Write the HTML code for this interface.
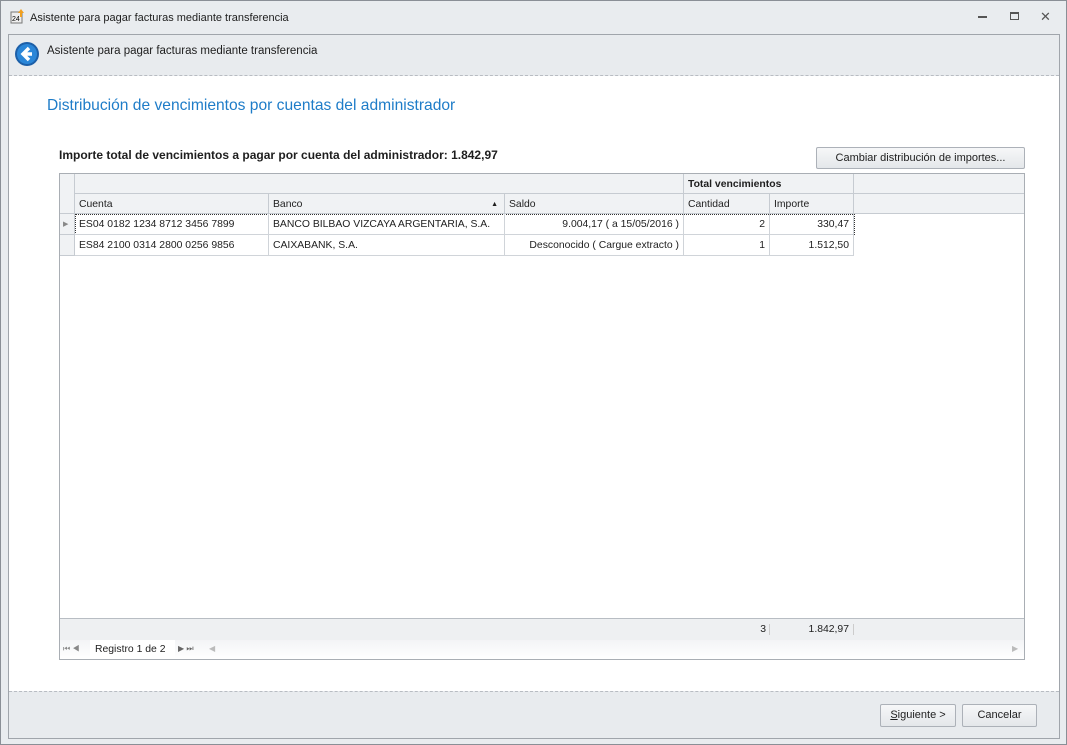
<!DOCTYPE html>
<html><head><meta charset="utf-8"><style>
*{box-sizing:border-box;margin:0;padding:0}
body{width:1067px;height:745px;position:relative;background:#dfe3e8;font-family:"Liberation Sans",sans-serif;font-size:11px;color:#1e1e1e;overflow:hidden}
.a{position:absolute}
.win{left:0;top:0;width:1067px;height:745px;border:1px solid #8a8f96;background:#e9ecef}
.panel{left:8px;top:34px;width:1052px;height:705px;border:1px solid #a0a5ab;background:#fff}
.hdr{left:0;top:0;width:1050px;height:41px;background:#e8ebee;border-bottom:1px dashed #b8bcc2}
.ftr{left:0;top:656px;width:1050px;height:47px;background:#e8ebee;border-top:1px dashed #b8bcc2}
.btn{border:1px solid #acb1b8;border-radius:2px;background:linear-gradient(#f6f7f8,#e4e7ea);text-align:center;line-height:20px;font-size:11px}
.grid{left:59px;top:173px;width:966px;height:487px;border:1px solid #a9aeb4;background:#fff;font-size:10.4px}
.c{position:absolute;border-right:1px solid #d0d4d9;border-bottom:1px solid #d0d4d9;white-space:nowrap;padding:1px 4px 0;line-height:20px;overflow:hidden}
.h{background:#f0f2f4;border-color:#c6cbd1}
.r{text-align:right}
</style></head><body>
<div class="a win"></div>
<svg class="a" style="left:10px;top:8px" width="16" height="16"><rect x="1" y="4" width="11" height="11" fill="#eee" stroke="#777"/><text x="2" y="13" font-size="7" font-family="Liberation Sans">24</text><path d="M11 1l3 4h-2v4h-2V5H8z" fill="#f0a020"/></svg>
<div class="a" style="left:30px;top:12px;font-size:11px">Asistente para pagar facturas mediante transferencia</div>
<div class="a" style="left:978px;top:16px;width:9px;height:2px;background:#555"></div>
<div class="a" style="left:1010px;top:12px;width:9px;height:8px;border:1px solid #555;border-top-width:2px"></div>
<div class="a" style="left:1040px;top:9px;font-size:13px;color:#555">✕</div>
<div class="a panel">
 <div class="a hdr"></div>
 <svg class="a" style="left:5px;top:6px" width="26" height="26"><circle cx="13" cy="13" r="12" fill="#1c5fa8"/><circle cx="13" cy="13" r="10" fill="#2a86d8"/><path d="M15 7l-6 6 6 6M9 13h9" stroke="#fff" stroke-width="3.5" fill="none"/></svg>
 <div class="a" style="left:38px;top:10px;font-size:11.5px">Asistente para pagar facturas mediante transferencia</div>
 <div class="a" style="left:38px;top:62px;font-size:15.6px;color:#1e7cc8">Distribución de vencimientos por cuentas del administrador</div>
 <div class="a" style="left:50px;top:113px;font-weight:bold;font-size:12px">Importe total de vencimientos a pagar por cuenta del administrador: 1.842,97</div>
 <div class="a btn" style="left:807px;top:112px;width:209px;height:22px">Cambiar distribución de importes...</div>
 <div class="a ftr"></div>
 <div class="a btn" style="left:871px;top:669px;width:76px;height:23px"><u>S</u>iguiente &gt;</div>
 <div class="a btn" style="left:953px;top:669px;width:75px;height:23px">Cancelar</div>
</div>
<div class="a grid">
 <div class="c h" style="left:0;top:0;width:15px;height:40px"></div>
 <div class="c h" style="left:15px;top:0;width:609px;height:20px"></div>
 <div class="c h" style="left:624px;top:0;width:170px;height:20px;font-weight:bold">Total vencimientos</div>
 <div class="c h" style="left:794px;top:0;width:170px;height:20px;border-right:0"></div>
 <div class="c h" style="left:15px;top:20px;width:194px;height:20px">Cuenta</div>
 <div class="c h" style="left:209px;top:20px;width:236px;height:20px">Banco<span style="position:absolute;right:6px;top:1px;font-size:7px">▲</span></div>
 <div class="c h" style="left:445px;top:20px;width:179px;height:20px">Saldo</div>
 <div class="c h" style="left:624px;top:20px;width:86px;height:20px">Cantidad</div>
 <div class="c h" style="left:710px;top:20px;width:84px;height:20px">Importe</div>
 <div class="c h" style="left:794px;top:20px;width:170px;height:20px;border-right:0"></div>
 <div class="c h" style="left:0;top:40px;width:15px;height:21px;font-size:7px;color:#888;padding:0 3px;line-height:21px">▶</div>
 <div class="c h" style="left:0;top:61px;width:15px;height:21px"></div>
 <div class="a" style="left:15px;top:40px;width:780px;height:21px;border:1px dotted #333"></div>
 <div class="c" style="left:15px;top:40px;width:194px;height:21px">ES04 0182 1234 8712 3456 7899</div>
 <div class="c" style="left:209px;top:40px;width:236px;height:21px">BANCO BILBAO VIZCAYA ARGENTARIA, S.A.</div>
 <div class="c r" style="left:445px;top:40px;width:179px;height:21px">9.004,17 ( a 15/05/2016 )</div>
 <div class="c r" style="left:624px;top:40px;width:86px;height:21px">2</div>
 <div class="c r" style="left:710px;top:40px;width:84px;height:21px">330,47</div>
 <div class="c" style="left:15px;top:61px;width:194px;height:21px">ES84 2100 0314 2800 0256 9856</div>
 <div class="c" style="left:209px;top:61px;width:236px;height:21px">CAIXABANK, S.A.</div>
 <div class="c r" style="left:445px;top:61px;width:179px;height:21px">Desconocido ( Cargue extracto )</div>
 <div class="c r" style="left:624px;top:61px;width:86px;height:21px">1</div>
 <div class="c r" style="left:710px;top:61px;width:84px;height:21px">1.512,50</div>
 <div class="a" style="left:0;top:444px;width:964px;height:22px;background:#eef0f2;border-top:1px solid #b8bdc3"></div>
 <div class="a r" style="left:690px;top:450px;width:20px;border-right:1px solid #ccc;padding-right:3px">3</div>
 <div class="a r" style="left:710px;top:450px;width:84px;border-right:1px solid #ccc;padding-right:4px">1.842,97</div>
 <div class="a" style="left:0;top:466px;width:964px;height:19px;background:linear-gradient(#f3f4f6,#fff)"></div>
 <div class="a" style="left:3px;top:470px;font-size:8px;color:#888">⏮ ◀</div>
 <div class="a" style="left:30px;top:466px;width:85px;height:19px;background:#fff;padding-left:5px;line-height:19px">Registro 1 de 2</div>
 <div class="a" style="left:118px;top:470px;font-size:8px;color:#666">▶ ⏭</div>
 <div class="a" style="left:149px;top:470px;font-size:8px;color:#bbb">◀</div>
 <div class="a" style="left:952px;top:470px;font-size:8px;color:#bbb">▶</div>
</div>
</body></html>
